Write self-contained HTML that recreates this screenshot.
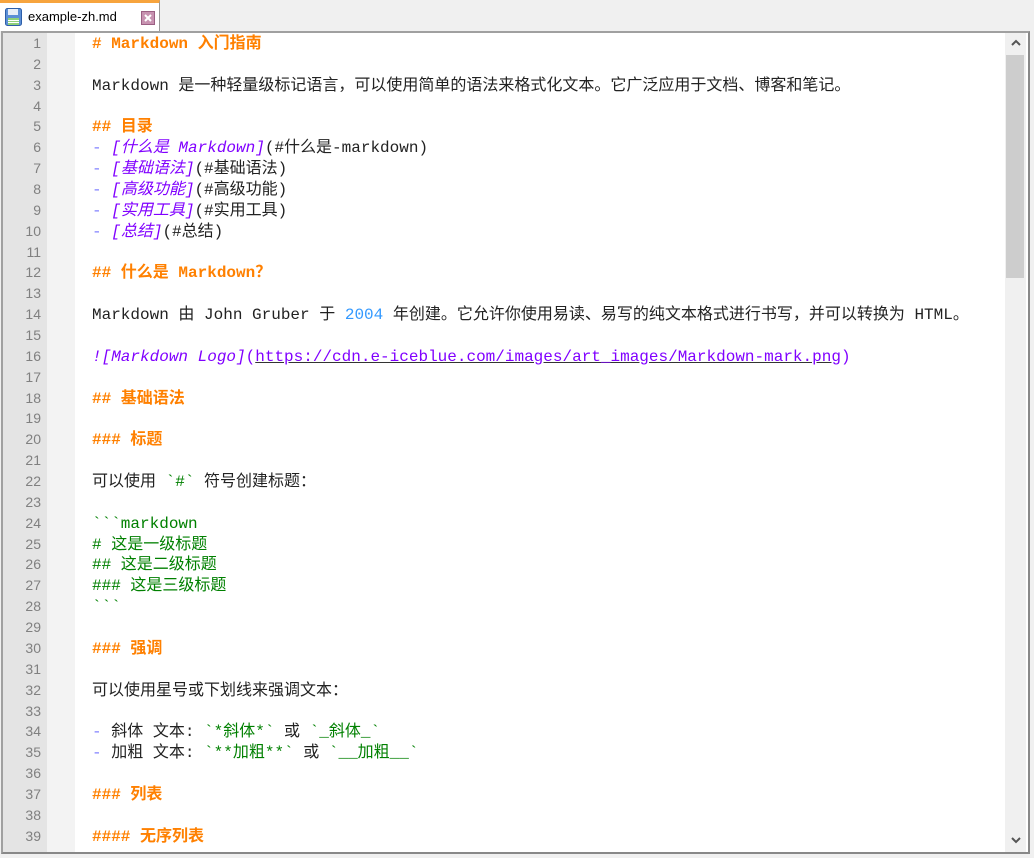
<!DOCTYPE html>
<html><head><meta charset="utf-8"><style>
html,body{margin:0;width:1034px;height:858px;overflow:hidden;}
body{background:#f0f0f0;position:relative;font-family:"Liberation Mono","Noto Sans CJK SC",monospace;}
.tab{position:absolute;left:0;top:0;width:160px;height:31px;background:#fff;border-top:3px solid #f7a43d;box-sizing:border-box;border-right:1px solid #999;}
.tab .t{position:absolute;left:28px;top:6px;font:13px "Liberation Sans","Noto Sans CJK SC",sans-serif;color:#000}
.frame{position:absolute;left:1px;top:31px;width:1029px;height:823px;border:2px solid #a0a0a0;border-right-color:#888;border-bottom-color:#888;box-sizing:border-box;background:#fff;}
.gut{position:absolute;left:3px;top:33px;width:44px;height:819px;background:#e4e4e4;}
.fold{position:absolute;left:47px;top:33px;width:28px;height:819px;background:#f3f3f3;}
.nums{position:absolute;left:3px;top:33px;width:38px;text-align:right;color:#808080;font:14px "Liberation Sans",sans-serif;}
.nums div,.code div{height:20.87px;line-height:20.87px;overflow:visible;white-space:pre;}
.code{position:absolute;left:92px;top:34px;width:910px;height:818px;overflow:hidden;font-size:16px;color:#222;}
.h{color:#ff8000;font-weight:bold}
.l{color:#8000ff;font-style:italic}
.d{color:#8080ff}
.g{color:#008000}
.n{color:#3399ff}
.u{text-decoration:underline;color:#8000ff}
.sb{position:absolute;left:1005px;top:33px;width:21px;height:819px;background:#f0f0f0}
.th{position:absolute;left:1006px;top:55px;width:18px;height:223px;background:#cdcdcd}
</style></head><body>
<div class="tab">
<svg style="position:absolute;left:5px;top:5px" width="17" height="18" viewBox="0 0 17 18"><rect x="0.5" y="0.5" width="16" height="17" rx="2" fill="#5b8fd6" stroke="#2d5ea8"/><rect x="3" y="1" width="10" height="6" fill="#e8eef8"/><rect x="3" y="10" width="11" height="7" fill="#8fd07a"/><rect x="3" y="12" width="11" height="1" fill="#fff"/><rect x="3" y="14" width="11" height="1" fill="#fff"/></svg>
<span class="t">example-zh.md</span>
<svg style="position:absolute;left:141px;top:8px" width="14" height="14" viewBox="0 0 14 14"><rect x="0.5" y="0.5" width="13" height="13" fill="#c792b0" stroke="#9b5f83"/><path d="M4 4L10 10M10 4L4 10" stroke="#fff" stroke-width="2"/></svg>
</div>
<div class="frame"></div>
<div class="gut"></div><div class="fold"></div>
<div class="sb"></div><div class="th"></div>
<svg style="position:absolute;left:1010px;top:38px" width="12" height="10"><path d="M2 7L6 3L10 7" stroke="#555" stroke-width="2" fill="none"/></svg>
<svg style="position:absolute;left:1010px;top:835px" width="12" height="10"><path d="M2 3L6 7L10 3" stroke="#555" stroke-width="2" fill="none"/></svg>
<div class="nums"><div>1</div><div>2</div><div>3</div><div>4</div><div>5</div><div>6</div><div>7</div><div>8</div><div>9</div><div>10</div><div>11</div><div>12</div><div>13</div><div>14</div><div>15</div><div>16</div><div>17</div><div>18</div><div>19</div><div>20</div><div>21</div><div>22</div><div>23</div><div>24</div><div>25</div><div>26</div><div>27</div><div>28</div><div>29</div><div>30</div><div>31</div><div>32</div><div>33</div><div>34</div><div>35</div><div>36</div><div>37</div><div>38</div><div>39</div></div>
<div class="code"><div class="h"># Markdown 入门指南</div><div> </div><div>Markdown 是一种轻量级标记语言，可以使用简单的语法来格式化文本。它广泛应用于文档、博客和笔记。</div><div> </div><div class="h">## 目录</div><div><span class="d">-</span> <span class="l">[什么是 Markdown]</span>(#什么是-markdown)</div><div><span class="d">-</span> <span class="l">[基础语法]</span>(#基础语法)</div><div><span class="d">-</span> <span class="l">[高级功能]</span>(#高级功能)</div><div><span class="d">-</span> <span class="l">[实用工具]</span>(#实用工具)</div><div><span class="d">-</span> <span class="l">[总结]</span>(#总结)</div><div> </div><div class="h">## 什么是 Markdown？</div><div> </div><div>Markdown 由 John Gruber 于 <span class="n">2004</span> 年创建。它允许你使用易读、易写的纯文本格式进行书写，并可以转换为 HTML。</div><div> </div><div><span class="l">![Markdown Logo]</span><span style="color:#8000ff">(</span><span class="u" style="text-decoration-color:#333">https://cdn.e-iceblue.com/images/art_images/Markdown-mark.png</span><span style="color:#8000ff">)</span></div><div> </div><div class="h">## 基础语法</div><div> </div><div class="h">### 标题</div><div> </div><div>可以使用 <span class="g">&#96;#&#96;</span> 符号创建标题：</div><div> </div><div class="g">&#96;&#96;&#96;markdown</div><div class="g"># 这是一级标题</div><div class="g">## 这是二级标题</div><div class="g">### 这是三级标题</div><div class="g">&#96;&#96;&#96;</div><div> </div><div class="h">### 强调</div><div> </div><div>可以使用星号或下划线来强调文本：</div><div> </div><div><span class="d">-</span> 斜体 文本: <span class="g">&#96;*斜体*&#96;</span> 或 <span class="g">&#96;_斜体_&#96;</span></div><div><span class="d">-</span> 加粗 文本: <span class="g">&#96;**加粗**&#96;</span> 或 <span class="g">&#96;__加粗__&#96;</span></div><div> </div><div class="h">### 列表</div><div> </div><div class="h">#### 无序列表</div></div>
</body></html>
